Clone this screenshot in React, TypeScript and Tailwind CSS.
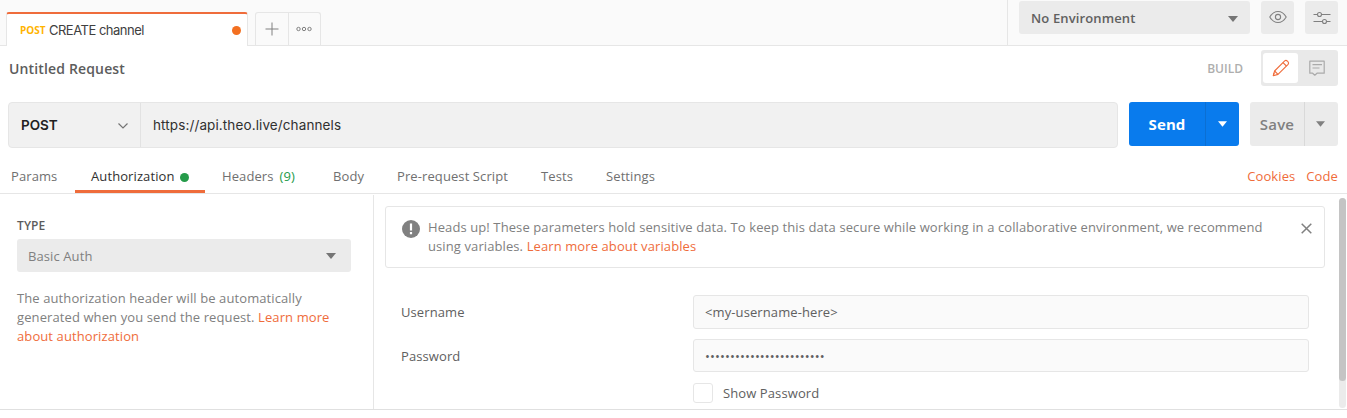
import type { ReactNode } from "react";

function Caret({ className }: { className: string }) {
  return (
    <svg viewBox="0 0 10 6" className={"h-[6px] shrink-0 " + className}>
      <path d="M0 0h10L5 6z" fill="currentColor" />
    </svg>
  );
}

function TopBar() {
  return (
    <header className="flex h-[46px] bg-[#fafafa]">
      <div className="w-[6px] shrink-0 border-b border-[#e6e6e6]" />
      <div className="mt-3 flex h-[34px] w-[242px] shrink-0 items-center rounded-t-[3px] border-x border-t-2 border-x-[#e6e6e6] border-t-[#ef6c3b] bg-white pl-[13px] pr-[6px]">
        <span className="w-[29px] text-[10px] font-bold leading-4 text-[#ffb400]">POST</span>
        <span className="font-['Inter','Liberation_Sans',sans-serif] text-[13px] leading-4 tracking-[-0.5px] text-[#404040]">CREATE channel</span>
        <span className="ml-auto size-[9px] rounded-full bg-[#f37021]" />
      </div>
      <div className="flex flex-1 border-b border-[#e6e6e6]">
        <div className="ml-[7px] mt-3 flex h-[33px] w-[66px] rounded-t-[3px] border border-b-0 border-[#e6e6e6] text-[#808080]">
          <button className="flex w-[33px] items-center justify-center border-r border-[#e6e6e6]">
            <svg viewBox="0 0 14 14" className="size-[14px]" fill="none" stroke="currentColor">
              <path d="M.5 7h13M7 .5v13" />
            </svg>
          </button>
          <button className="flex flex-1 items-center justify-center pr-[2px]">
            <svg viewBox="0 0 16 6" className="h-[6px] w-4" fill="none" stroke="currentColor">
              <circle cx="2.500" cy="3" r="1.700" />
              <circle cx="8" cy="3" r="1.700" />
              <circle cx="13.500" cy="3" r="1.700" />
            </svg>
          </button>
        </div>
        <div className="ml-auto flex w-[340px] gap-[11px] border-l border-[#e6e6e6] pl-[11px] pt-px">
          <button className="flex h-[33px] w-[231px] items-center justify-between rounded-[3px] bg-[#ebebeb] pl-[12px] pr-[12px] pt-[2px] text-[13px] font-semibold tracking-[0.130px] text-[#606060]">
            No Environment
            <Caret className="w-[10px] text-[#757575]" />
          </button>
          <button className="flex size-[33px] items-center justify-center rounded-[3px] bg-[#ebebeb] text-[#808080]">
            <svg viewBox="0 0 18 14" className="-mt-px h-[14px] w-[18px]" fill="none" stroke="currentColor" strokeWidth="1.100">
              <path d="M.8 7Q4 1.500 9 1.500T17.200 7Q14 12.500 9 12.500T.8 7Z" />
              <circle cx="9" cy="7" r="2.600" />
            </svg>
          </button>
          <button className="flex size-[33px] items-center justify-center rounded-[3px] bg-[#ebebeb] text-[#808080]">
            <svg viewBox="0 0 18 14" className="h-[14px] w-[18px]" fill="none" stroke="currentColor" strokeWidth="1.100">
              <path d="M.5 3.500h4M8.500 3.500h9M.5 10.500h9M13.500 10.500h4" />
              <circle cx="6.500" cy="3.500" r="2" />
              <circle cx="11.500" cy="10.500" r="2" />
            </svg>
          </button>
        </div>
      </div>
    </header>
  );
}

function TitleRow() {
  return (
    <div className="flex h-14 items-start pl-[9px] pr-[9px] pt-1">
      <h1 className="pt-[9px] text-[14px] font-semibold leading-5 tracking-[0.150px] text-[#5c5c5c]">Untitled Request</h1>
      <span className="ml-auto pt-[9px] text-[12px] font-semibold leading-5 text-[#aeaeae]">BUILD</span>
      <div className="ml-[18px] flex h-9 w-[77px] rounded-[3px] bg-[#e9e9e9] py-[3px] pl-[2px]">
        <button className="flex w-[35px] items-center justify-center rounded-[3px] bg-white text-[#ef6c3b]">
          <svg viewBox="0 0 18 18" className="size-[18px]" fill="none" stroke="currentColor" strokeWidth="1.100" strokeLinejoin="round">
            <path d="M1.300 16.700L2.600 12 12.700 1.900Q14 .8 15.400 2.100L15.900 2.600Q17.200 4 16.100 5.300L6 15.400Z" />
            <path d="M2.600 12L6 15.400M11 3.600L14.400 7M1.300 16.700l.8-2.700" />
          </svg>
        </button>
        <button className="flex flex-1 items-center justify-center pr-[2px] text-[#aaa]">
          <svg viewBox="0 0 16 16" className="size-4" fill="none" stroke="currentColor" strokeWidth="1.200">
            <path d="M.8 1.200H15.200V13.200H8L5.800 15.200 3.600 13.200H.8Z" strokeLinejoin="round" />
            <path d="M3.500 4.700h9.500M3.500 8h7" />
          </svg>
        </button>
      </div>
    </div>
  );
}

function UrlRow() {
  return (
    <div className="flex h-[56px] items-start pl-2">
      <div className="flex h-[46px] w-[1110px] rounded-[4px] border border-[#e6e6e6] bg-[#f1f1f1] font-['Inter','Liberation_Sans',sans-serif] text-[#303030]">
        <button className="flex w-[132px] items-center justify-between border-r border-[#e2e2e2] pl-3 pr-3 pt-px text-[13.500px] font-semibold text-[#212121]">
          POST
          <svg viewBox="0 0 10 6" className="h-[6px] w-[10px] text-[#757575]" fill="none" stroke="currentColor" strokeWidth="1.200">
            <path d="M.5.5L5 5 9.500.5" />
          </svg>
        </button>
        <span className="self-center pl-3 text-[13.500px] tracking-[0.110px]">https://api.theo.live/channels</span>
      </div>
      <div className="ml-[11px] flex h-11 w-[110px] items-center rounded-[3px] bg-[#097bed] text-[15px] font-bold text-white">
        <button className="h-full w-[77px] border-r border-[#0b6fd3] tracking-[0.100px]">Send</button>
        <button className="flex flex-1 justify-center"><Caret className="w-[9px]" /></button>
      </div>
      <div className="ml-[11px] flex h-11 w-[88px] items-center rounded-[3px] bg-[#ebebeb] text-[15px] font-semibold text-[#808080]">
        <button className="h-full w-[55px] border-r border-[#d9d9d9] tracking-[0.200px]">Save</button>
        <button className="flex flex-1 justify-center pr-[2px]"><Caret className="w-[9px]" /></button>
      </div>
    </div>
  );
}

function NavItem({ children, className }: { children: ReactNode; className: string }) {
  return <button className={"flex shrink-0 items-center whitespace-nowrap pt-[3px] " + className}>{children}</button>;
}

function RequestTabs() {
  return (
    <nav className="flex h-9 border-b border-[#e6e6e6] text-[13px] tracking-[0.100px] text-[#707070]">
      <NavItem className="w-[75px] pl-[11px]">Params</NavItem>
      <NavItem className="w-[130px] gap-[5px] border-b-[3px] border-[#ef6c3b] pb-0 pl-4 pt-[6px] text-[#303030]">
        Authorization
        <span className="size-[9px] rounded-full bg-[#259b4a]" />
      </NavItem>
      <NavItem className="w-[128px] gap-[6px] pl-[17px]">
        Headers <span className="text-[#259b4a]">(9)</span>
      </NavItem>
      <NavItem className="w-16">Body</NavItem>
      <NavItem className="w-36">Pre-request Script</NavItem>
      <NavItem className="w-[65px]">Tests</NavItem>
      <NavItem className="w-[80px]">Settings</NavItem>
      <div className="ml-auto flex gap-[11px] pr-[9px] text-[#ef6c3b]">
        <NavItem className="">Cookies</NavItem>
        <NavItem className="">Code</NavItem>
      </div>
    </nav>
  );
}

function AuthType() {
  return (
    <aside className="mt-px w-[374px] shrink-0 border-r border-[#e6e6e6] pl-[17px] pt-[21px] text-[13px] leading-[19px] tracking-[0.100px] text-[#808080]">
      <h2 className="text-[12px] font-semibold text-[#5c5c5c]">TYPE</h2>
      <button className="mt-[4px] flex h-[33px] w-[334px] items-center justify-between rounded-[3px] bg-[#ebebeb] pl-[11px] pr-[15px] pt-[2px]">
        Basic Auth
        <Caret className="mb-[2px] w-[10px] text-[#757575]" />
      </button>
      <p className="mt-[17px] w-[325px]">
        The authorization header will be automatically generated when you send the request.{" "}
        <a className="text-[#ef6c3b]">Learn more about authorization</a>
      </p>
    </aside>
  );
}

function Credentials() {
  return (
    <section className="flex-1 pl-[11px] pt-3 text-[13px] tracking-[0.100px] text-[#606060]">
      <div className="flex h-[62px] w-[940px] items-start rounded-[3px] border border-[#e6e6e6] pl-4 pt-[11px] leading-[19px] text-[#808080]">
        <svg viewBox="0 0 18 18" className="mt-[2px] size-[18px] shrink-0">
          <circle cx="9" cy="9" r="9" fill="#808080" />
          <path d="M7.900 3.500h2.200v7H7.900zM7.900 12h2.200v2.200H7.900z" fill="#fff" />
        </svg>
        <p className="ml-2 w-[850px]">
          Heads up! These parameters hold sensitive data. To keep this data secure while working in a collaborative environment, we recommend
          <br />
          using variables. <a className="text-[#ef6c3b]">Learn more about variables</a>
        </p>
        <svg viewBox="0 0 11 11" className="ml-[23px] mt-[5px] size-[11px] shrink-0" fill="none" stroke="#808080" strokeWidth="1.500">
          <path d="M.7.7l9.600 9.600M10.300.7L.7 10.300" />
        </svg>
      </div>
      <div className="ml-4 mt-[27px] grid w-[908px] grid-cols-[292px_1fr] items-center">
        <label className="pt-[2px]">Username</label>
        <div className="flex h-[34px] items-center rounded-[3px] border border-[#e6e6e6] bg-[#fafafa] pl-[11px] pt-[2px]">&lt;my-username-here&gt;</div>
        <label className="pt-[12px]">Password</label>
        <div className="mt-[10px] flex h-[33px] items-center rounded-[3px] border border-[#e6e6e6] bg-[#fafafa] pl-[11px] pt-[2px]">
          ••••••••••••••••••••••••
        </div>
        <span />
        <label className="mt-[11px] flex h-5 items-center gap-[10px]">
          <span className="size-5 rounded-[3px] border border-[#e6e6e6] bg-white" />
          <span className="pt-[2px]">Show Password</span>
        </label>
      </div>
    </section>
  );
}

export default function App() {
  return (
    <main className="flex h-[418px] w-[1347px] flex-col overflow-hidden bg-white font-['Open_Sans','Noto_Sans',sans-serif]">
      <TopBar />
      <TitleRow />
      <UrlRow />
      <RequestTabs />
      <div className="flex h-[216px] border-b border-[#e0e0e0]">
        <AuthType />
        <Credentials />
        <div className="mr-px mt-1 h-[210px] w-[7px] rounded-full bg-[#ebebeb]">
          <div className="h-[183px] rounded-full bg-[#c4c4c4]" />
        </div>
      </div>
    </main>
  );
}
